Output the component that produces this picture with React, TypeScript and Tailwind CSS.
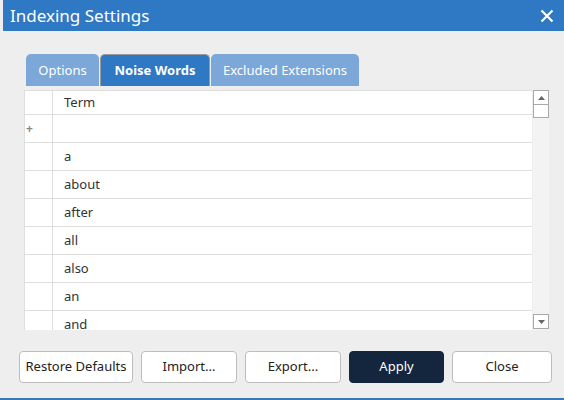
import React from 'react';

const terms = ['a', 'about', 'after', 'all', 'also', 'an', 'and'];

const tabs = [
  { label: 'Options', w: 'w-[73px]', active: false },
  { label: 'Noise Words', w: 'w-[110px]', active: true },
  { label: 'Excluded Extensions', w: 'w-[148px]', active: false },
];

const buttons = [
  { label: 'Restore Defaults', w: 'w-[114px]', primary: false },
  { label: 'Import...', w: 'w-[96px]', primary: false },
  { label: 'Export...', w: 'w-[96px]', primary: false },
  { label: 'Apply', w: 'w-[95px]', primary: true },
  { label: 'Close', w: 'w-[100px]', primary: false },
];

const App = () => {
  return (
    <div
      className="w-[564px] h-[400px] bg-[#eeeeee] flex flex-col overflow-hidden"
      style={{ fontFamily: '"Noto Sans", "Open Sans", sans-serif' }}
    >
      {/* title bar */}
      <div className="h-[31px] ml-[3px] bg-[#2f78c4] flex items-center justify-between pl-[7px] pr-[10px]">
        <span className="text-white text-[17px] leading-none">Indexing Settings</span>
        <svg width="14" height="14" viewBox="0 0 14 14" className="text-white">
          <path d="M1.5 1.5 L12.5 12.5 M12.5 1.5 L1.5 12.5" stroke="currentColor" strokeWidth="2.2" />
        </svg>
      </div>

      {/* tabs */}
      <div className="flex gap-[1px] ml-[26px] mt-[23px] h-[32px]">
        {tabs.map((t) => (
          <div
            key={t.label}
            className={`${t.w} rounded-t-[5px] flex items-center justify-center pt-[1px] text-[13px] text-white ${
              t.active ? 'bg-[#2f78c4] font-bold border-t border-x border-[#9a9a9a]' : 'bg-[#7ba8d8]'
            }`}
          >
            {t.label}
          </div>
        ))}
      </div>

      {/* grid */}
      <div className="flex gap-[1px] ml-[24px] mt-[4px] w-[525px] h-[240px]">
        <div className="flex-1 bg-white border-t border-l border-[#dedede] overflow-hidden text-[13px] text-[#333]">
          <div className="flex h-[24px] border-b border-[#dedede]">
            <div className="w-[28px] border-r border-[#dedede]" />
            <div className="flex-1 flex items-center pl-[11px]">Term</div>
          </div>
          <div className="flex h-[28px] border-b border-[#dedede]">
            <div className="w-[28px] border-r border-[#dedede] flex items-center pl-[1px] text-[#888] text-[12px] font-bold">+</div>
            <div className="flex-1" />
          </div>
          {terms.map((t) => (
            <div key={t} className="flex h-[28px] border-b border-[#dedede]">
              <div className="w-[28px] border-r border-[#dedede]" />
              <div className="flex-1 flex items-center pl-[11px]">{t}</div>
            </div>
          ))}
        </div>
        {/* scrollbar */}
        <div className="w-[16px] bg-[#f3f3f3] flex flex-col justify-between">
          <div>
            <div className="h-[15px] border border-[#a9a9a9] bg-white flex items-center justify-center">
              <svg width="7" height="4" viewBox="0 0 7 4"><path d="M0 4 L3.5 0 L7 4 Z" fill="#666" /></svg>
            </div>
            <div className="h-[13px] border border-[#a9a9a9] border-t-0 bg-white" />
          </div>
          <div className="h-[15px] mb-[1px] border border-[#a9a9a9] bg-white flex items-center justify-center">
            <svg width="7" height="4" viewBox="0 0 7 4"><path d="M0 0 L3.5 4 L7 0 Z" fill="#666" /></svg>
          </div>
        </div>
      </div>

      {/* buttons */}
      <div className="flex gap-[8px] ml-[19px] mt-[21px]">
        {buttons.map((b) => (
          <button
            key={b.label}
            className={`${b.w} h-[32px] rounded-[4px] border text-[13px] ${
              b.primary ? 'bg-[#13263d] border-[#13263d] text-white' : 'bg-white border-[#bdbdbd] text-[#222]'
            }`}
          >
            {b.label}
          </button>
        ))}
      </div>

      <div className="flex-1" />
      <div className="h-[2px] bg-[#3a78b8]" />
    </div>
  );
};

export default App;
